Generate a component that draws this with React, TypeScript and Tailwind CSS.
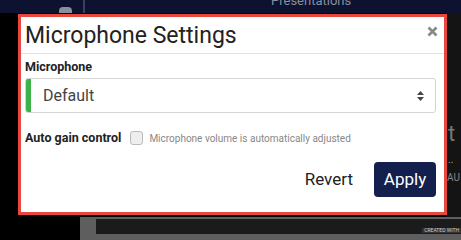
import React from "react";

const font = { fontFamily: "Roboto, 'Liberation Sans', sans-serif" };

const App: React.FC = () => {
  return (
    <div className="relative h-[240px] w-[461px] overflow-hidden bg-black" style={font}>
      {/* top nav bar behind the modal */}
      <div className="flex h-[13px] w-full items-end overflow-hidden bg-[#0d1230]">
        <div className="ml-[59px] h-[6px] w-[13px] rounded-t-[4px] bg-[#8a8f9f]" />
        <div className="ml-[11px] h-[13px] w-[2px] bg-[#3a4058]" />
        <div className="ml-[186px] mb-[6px] text-[13px] leading-none text-[#8a8f9f]">Presentations</div>
      </div>

      {/* right-side background content */}
      <div className="absolute right-0 top-[13px] h-[204px] w-[15px] bg-[#141414]">
        <div className="mt-[110px] pl-[2px] text-[22px] leading-none text-[#777]">t</div>
        <div className="mt-[10px] pl-[2px] text-[10px] leading-none text-[#aaa]">..</div>
        <div className="mt-[8px] pl-[1px] text-[10px] leading-none text-[#888]">AU</div>
      </div>

      {/* bottom background strip */}
      <div className="absolute bottom-0 left-[80px] right-0 h-[23px] bg-[#5e5e5e] pl-[16px] pt-[2px]">
        <div className="flex h-[15px] items-end justify-end bg-[#1b1b1b]">
          <span className="mb-[1px] bg-[#333] px-[2px] text-[5px] leading-none text-[#ccc]">CREATED WITH</span>
        </div>
      </div>

      {/* modal */}
      <div className="absolute left-[18px] top-[14px] flex h-[201px] w-[429px] flex-col border-[3px] border-[#e8473f] bg-white">
        <div className="flex h-[36px] items-center justify-between pl-[4px] pr-[6px]">
          <h1 className="text-[23px] leading-none text-[#222]">Microphone Settings</h1>
          <svg width="11" height="11" viewBox="0 0 11 11" className="-mt-[7px]">
            <path d="M1.5 1.5 L9.5 9.5 M9.5 1.5 L1.5 9.5" stroke="#888" strokeWidth="2.6" />
          </svg>
        </div>
        <div className="h-px bg-[#e3e3e3]" />
        <div className="px-[4px] pt-[5px]">
          <div className="text-[12.5px] font-bold leading-[16px] text-[#222]">Microphone</div>
          <div className="mt-[3px] flex h-[35px] w-[411px] items-center overflow-hidden rounded-[3px] border border-[#d4d4d4]">
            <div className="h-full w-[5px] bg-[#3cb34a]" />
            <span className="ml-[12px] flex-1 text-[16px] text-[#444]">Default</span>
            <svg width="9" height="12" viewBox="0 0 9 12" className="mr-[10px]">
              <path d="M4.5 1 L8 5 H1 Z" fill="#444" />
              <path d="M4.5 11 L8 7 H1 Z" fill="#444" />
            </svg>
          </div>
          <div className="mt-[16px] flex items-center">
            <span className="text-[12.5px] font-bold text-[#222]">Auto gain control</span>
            <span className="ml-[9px] h-[14px] w-[13px] rounded-[3px] border border-[#bbb] bg-[#eee]" />
            <span className="ml-[6px] text-[10px] text-[#888]">Microphone volume is automatically adjusted</span>
          </div>
        </div>
        <div className="mt-auto mb-[15px] flex items-center justify-end gap-[21px] pr-[8px]">
          <span className="text-[17px] text-[#222]">Revert</span>
          <button className="h-[35px] w-[62px] rounded-[4px] bg-[#13204d] text-[17px] text-white">Apply</button>
        </div>
      </div>
    </div>
  );
};

export default App;
